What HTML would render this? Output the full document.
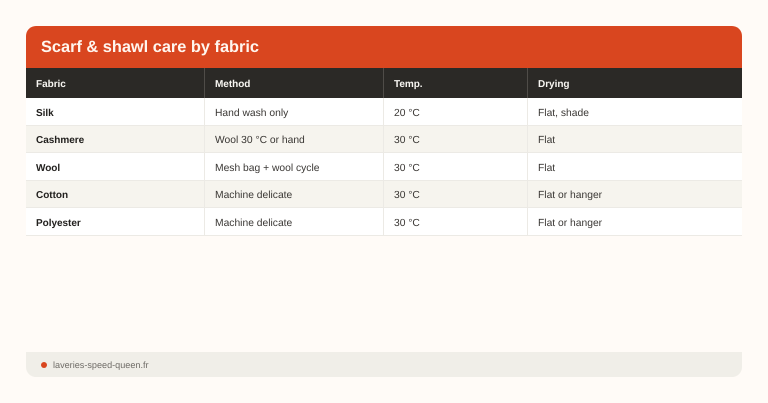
<!DOCTYPE html>
<html><head><meta charset="utf-8"><style>
html,body{margin:0;padding:0}
body{width:768px;height:403px;background:#fffbf7;overflow:hidden;position:relative;font-family:"Liberation Sans",sans-serif;text-rendering:geometricPrecision}
div{position:absolute;box-sizing:border-box}
.t{white-space:nowrap;font-size:10.3px;line-height:14px;color:#3a3734;letter-spacing:0}
.b{font-weight:700;color:#22201e;font-size:10px;letter-spacing:-.03px}
.h{font-weight:700;color:#f8f6f2;font-size:10px;letter-spacing:-.03px}
.l{width:1px;background:#eceae5}
.r{left:26px;width:716px;border-bottom:1px solid #eceae5}
</style></head><body>
<div style="left:26px;top:25.5px;width:716px;height:43px;background:#d9461f;border-radius:10px 10px 0 0"></div>
<div class="t" style="left:41px;top:37px;font-size:16.35px;line-height:21px;font-weight:700;color:#fff6ef;letter-spacing:0">Scarf &amp; shawl care by fabric</div>
<div style="left:26px;top:68px;width:716px;height:30px;background:#2b2926"></div>
<div class="r" style="top:98px;height:27.5px;background:#fff"></div>
<div class="r" style="top:125.5px;height:27.5px;background:#f6f4ee"></div>
<div class="r" style="top:153px;height:27.5px;background:#fff"></div>
<div class="r" style="top:180.5px;height:27.5px;background:#f6f4ee"></div>
<div class="r" style="top:208px;height:27.5px;background:#fff"></div>
<div class="l" style="left:204px;top:68px;height:30px;background:#4f4c48"></div>
<div class="l" style="left:383px;top:68px;height:30px;background:#4f4c48"></div>
<div class="l" style="left:527px;top:68px;height:30px;background:#4f4c48"></div>
<div class="l" style="left:204px;top:98px;height:137px"></div>
<div class="l" style="left:383px;top:98px;height:137px"></div>
<div class="l" style="left:527px;top:98px;height:137px"></div>
<div class="t h" style="left:36px;top:78px">Fabric</div>
<div class="t h" style="left:215px;top:78px">Method</div>
<div class="t h" style="left:394px;top:78px">Temp.</div>
<div class="t h" style="left:538px;top:78px">Drying</div>
<div class="t b" style="left:36px;top:107px">Silk</div>
<div class="t" style="left:215px;top:107px">Hand wash only</div>
<div class="t" style="left:394px;top:107px">20 °C</div>
<div class="t" style="left:538px;top:107px">Flat, shade</div>
<div class="t b" style="left:36px;top:134px">Cashmere</div>
<div class="t" style="left:215px;top:134px">Wool 30 °C or hand</div>
<div class="t" style="left:394px;top:134px">30 °C</div>
<div class="t" style="left:538px;top:134px">Flat</div>
<div class="t b" style="left:36px;top:162px">Wool</div>
<div class="t" style="left:215px;top:162px">Mesh bag + wool cycle</div>
<div class="t" style="left:394px;top:162px">30 °C</div>
<div class="t" style="left:538px;top:162px">Flat</div>
<div class="t b" style="left:36px;top:189px">Cotton</div>
<div class="t" style="left:215px;top:189px">Machine delicate</div>
<div class="t" style="left:394px;top:189px">30 °C</div>
<div class="t" style="left:538px;top:189px">Flat or hanger</div>
<div class="t b" style="left:36px;top:217px">Polyester</div>
<div class="t" style="left:215px;top:217px">Machine delicate</div>
<div class="t" style="left:394px;top:217px">30 °C</div>
<div class="t" style="left:538px;top:217px">Flat or hanger</div>
<div style="left:26px;top:352px;width:716px;height:25px;background:#f0eee8;border-radius:0 0 10px 10px"></div>
<div style="left:41px;top:362px;width:6.4px;height:6.4px;border-radius:50%;background:#d9461f"></div>
<div class="t" style="left:53px;top:358px;font-size:9.1px;color:#6f6c67;letter-spacing:0">laveries-speed-queen.fr</div>
</body></html>
